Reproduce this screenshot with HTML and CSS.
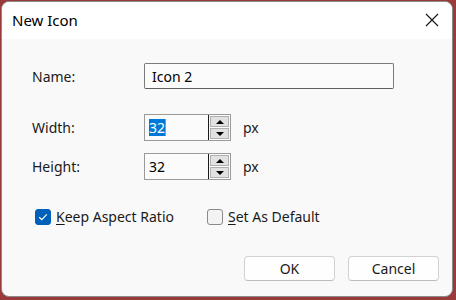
FILE: index.html
```html
<!DOCTYPE html>
<html>
<head>
<meta charset="utf-8">
<link rel="stylesheet" href="styles.css">
</head>
<body>
<div class="window">
  <div class="titlebar">
    <span class="title">New Icon</span>
    <svg class="close" width="14" height="14" viewBox="0 0 14 14"><path d="M1 1 L13 13 M13 1 L1 13" stroke="#1a1a1a" stroke-width="1.2" fill="none"/></svg>
  </div>
  <div class="content">
    <div class="row name-row">
      <span class="label">Name:</span>
      <div class="textbox">Icon 2</div>
    </div>
    <div class="row width-row">
      <span class="label">Width:</span>
      <div class="spin">
        <div class="spin-field"><span class="sel">32</span><span class="caret"></span></div>
        <div class="spin-btns">
          <div class="sbtn"><span class="tri up"></span></div>
          <div class="sbtn"><span class="tri down"></span></div>
        </div>
      </div>
      <span class="unit">px</span>
    </div>
    <div class="row height-row">
      <span class="label">Height:</span>
      <div class="spin">
        <div class="spin-field">32</div>
        <div class="spin-btns">
          <div class="sbtn"><span class="tri up"></span></div>
          <div class="sbtn"><span class="tri down"></span></div>
        </div>
      </div>
      <span class="unit">px</span>
    </div>
    <div class="checks">
      <div class="check">
        <span class="box checked"><svg width="10" height="8" viewBox="0 0 10 8"><path d="M1.2 4.2 L3.8 6.6 L8.8 1.4" stroke="#fff" stroke-width="1.2" fill="none"/></svg></span>
        <span class="clabel"><u>K</u>eep Aspect Ratio</span>
      </div>
      <div class="check">
        <span class="box"></span>
        <span class="clabel"><u>S</u>et As Default</span>
      </div>
    </div>
    <div class="buttons">
      <div class="btn">OK</div>
      <div class="btn">Cancel</div>
    </div>
  </div>
</div>
</body>
</html>
```
FILE: styles.css
```css
html, body {
  margin: 0;
  padding: 0;
}
body {
  width: 456px;
  height: 300px;
  background: #9a3a3a;
  font-family: "Noto Sans", "Open Sans", sans-serif;
  font-size: 14px;
  color: #1a1a1a;
  overflow: hidden;
}
.window {
  margin: 1px 0 0 1px;
  width: 450px;
  height: 294px;
  background: #f9f9f9;
  border: 1px solid #8a8a8a;
  border-radius: 8px;
  overflow: hidden;
  display: flex;
  flex-direction: column;
}
.titlebar {
  height: 37px;
  background: #ffffff;
  display: flex;
  align-items: center;
  justify-content: space-between;
  padding: 0 13px 0 10px;
  flex-shrink: 0;
}
.title {
  font-size: 15px;
  color: #000;
  margin-top: -1px;
}
.close {
  display: block;
  margin-top: -1px;
}
.content {
  padding: 24px 0 0 30px;
  display: flex;
  flex-direction: column;
}
.row {
  display: flex;
  align-items: center;
}
.label {
  width: 112px;
  flex-shrink: 0;
}
.textbox {
  width: 241px;
  height: 24px;
  border: 1px solid #7a7a7a;
  border-bottom-color: #606060;
  border-radius: 2px;
  background: #fbfbfb;
  padding: 0 0 0 7px;
  display: flex;
  align-items: center;
  color: #000;
}
.width-row {
  margin-top: 25px;
}
.height-row {
  margin-top: 12px;
}
.spin {
  width: 85px;
  height: 25px;
  border: 1px solid #9a9a9a;
  background: #fbfbfb;
  display: flex;
  align-items: center;
}
.spin-field {
  flex: 1;
  height: 100%;
  display: flex;
  align-items: center;
  padding-left: 4px;
  border-right: 1px solid #1a1a1a;
  color: #000;
}
.sel {
  background: #0078d7;
  color: #fff;
  line-height: 17px;
}
.caret {
  width: 1px;
  height: 17px;
  background: #e8861e;
}
.spin-btns {
  width: 19px;
  padding: 1px;
  display: flex;
  flex-direction: column;
  gap: 1px;
}
.sbtn {
  height: 9px;
  border: 1px solid #b0b0b0;
  background: #e1e1e1;
  display: flex;
  align-items: center;
  justify-content: center;
}
.tri {
  width: 0;
  height: 0;
  border-left: 4px solid transparent;
  border-right: 4px solid transparent;
}
.tri.up {
  border-bottom: 4px solid #000;
}
.tri.down {
  border-top: 4px solid #000;
}
.unit {
  margin-left: 12px;
}
.checks {
  margin-top: 27px;
  display: flex;
  align-items: center;
  padding-left: 3px;
}
.check {
  display: flex;
  align-items: center;
  gap: 5px;
}
.check + .check {
  margin-left: 33px;
}
.box {
  width: 14px;
  height: 14px;
  border: 1px solid #8a8a8a;
  border-radius: 3px;
  background: #f3f3f3;
  display: flex;
  align-items: center;
  justify-content: center;
}
.box.checked {
  background: #005fb8;
  border-color: #005fb8;
}
.box svg {
  display: block;
}
.clabel u {
  text-underline-offset: 2px;
}
.buttons {
  margin-top: 30px;
  display: flex;
  justify-content: flex-end;
  gap: 13px;
  padding-right: 13px;
}
.btn {
  width: 89px;
  height: 23px;
  border: 1px solid #d2d2d2;
  border-bottom-color: #bcbcbc;
  border-radius: 4px;
  background: #fefefe;
  display: flex;
  align-items: center;
  justify-content: center;
  color: #1a1a1a;
}
```
